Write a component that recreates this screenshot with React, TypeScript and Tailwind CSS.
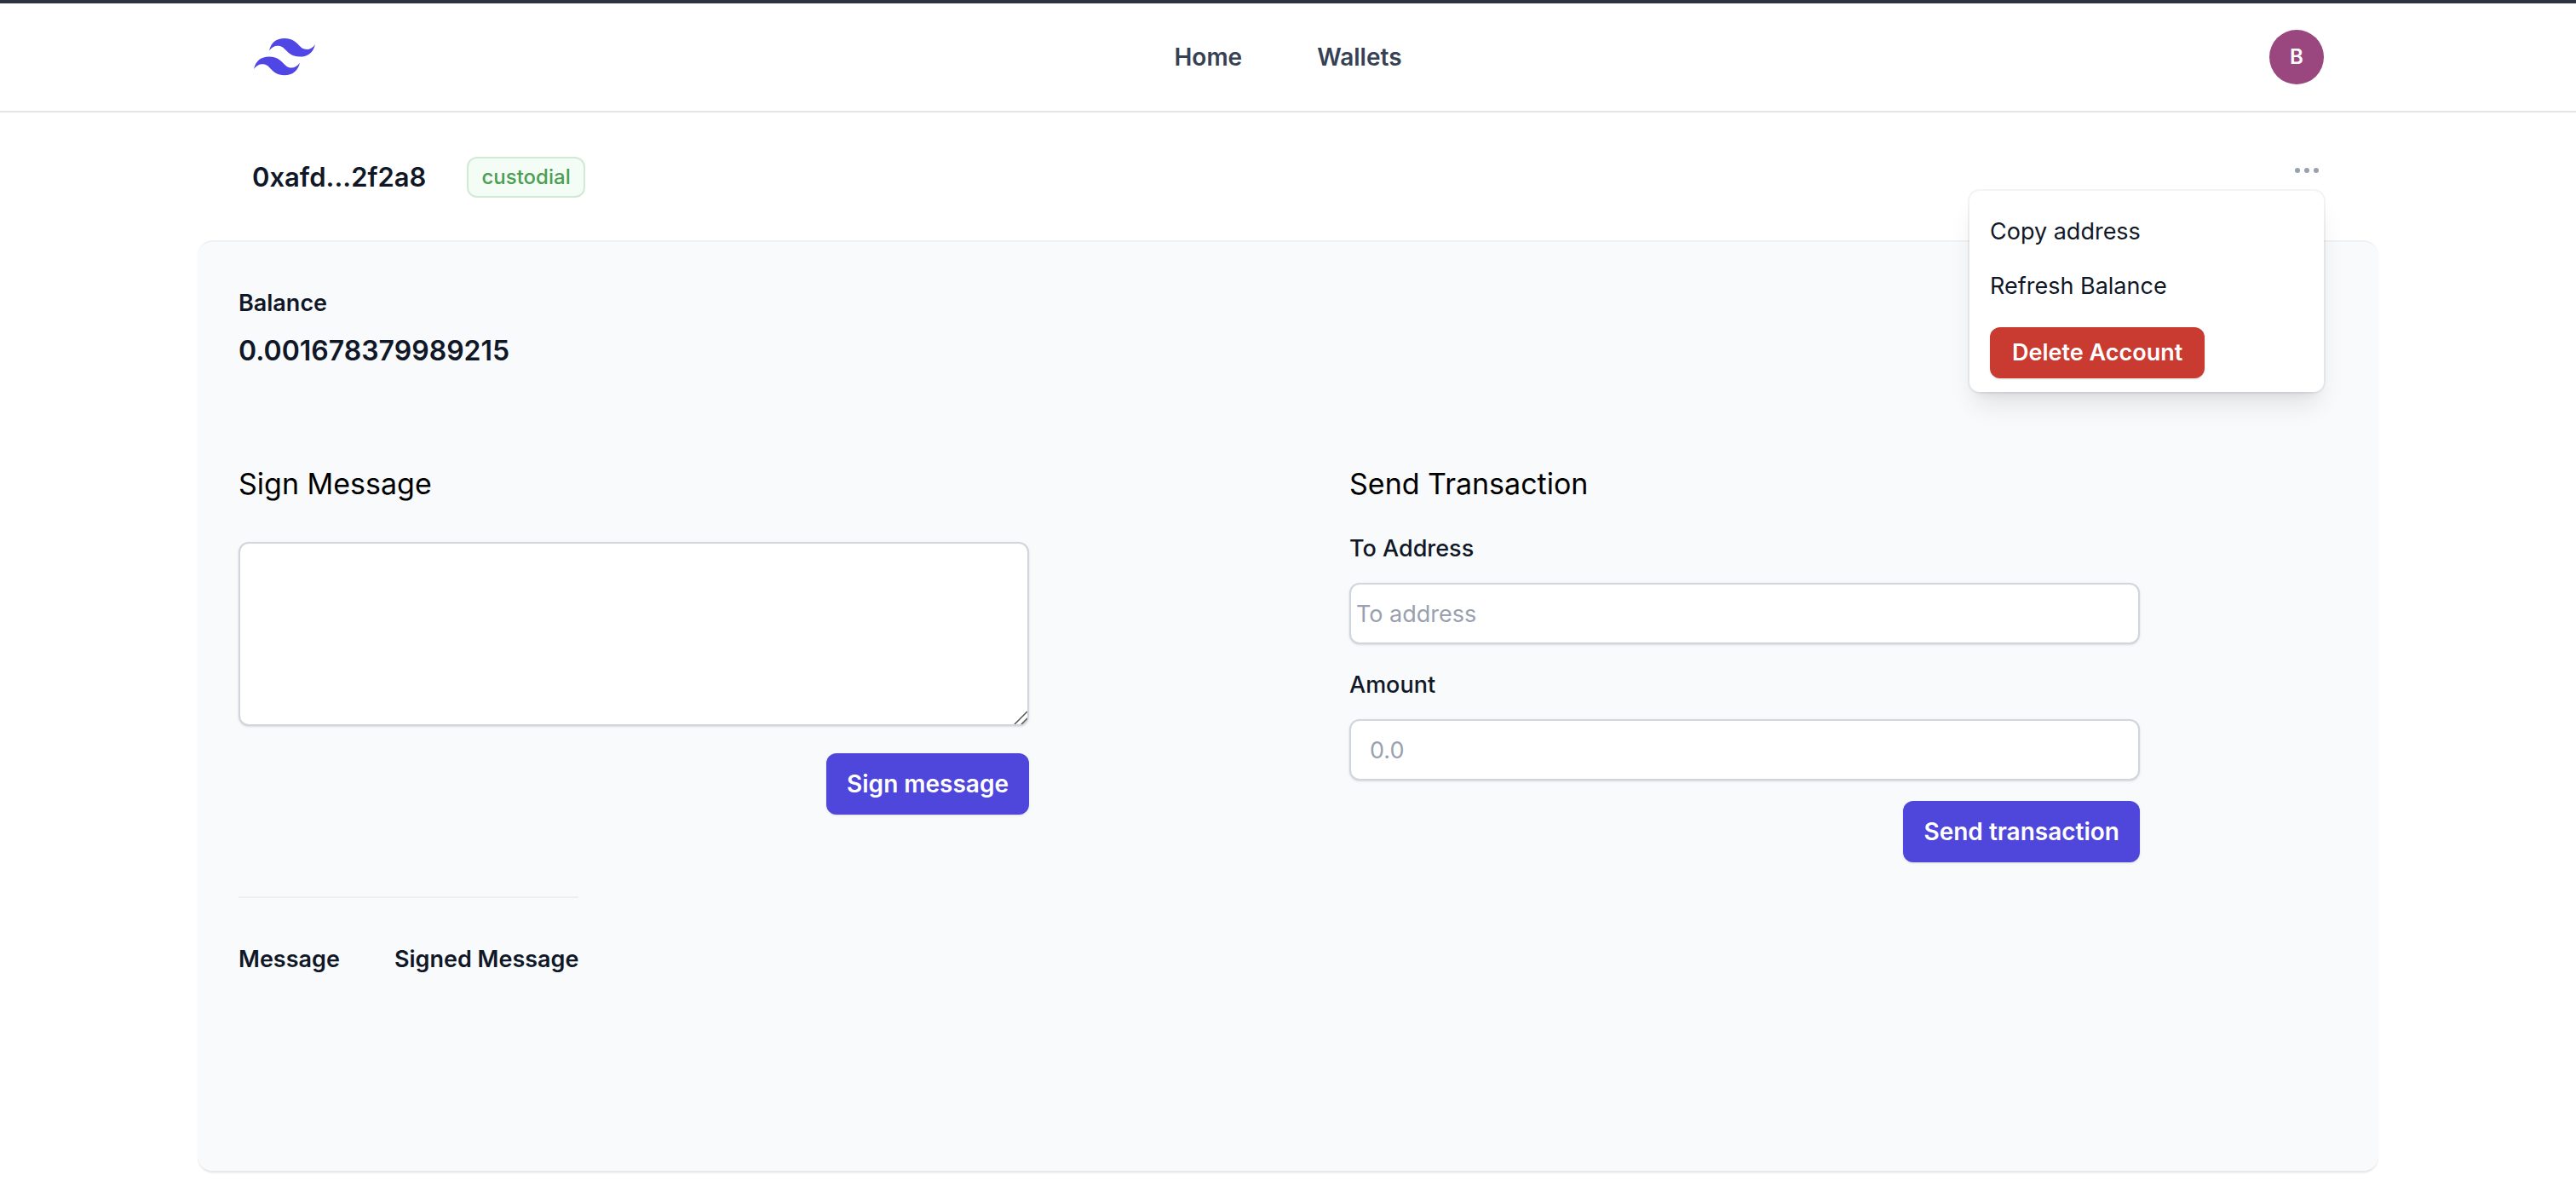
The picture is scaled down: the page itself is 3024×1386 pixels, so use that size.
import React from "react";

function Logo() {
  return (
    <svg viewBox="0 0 54 33" className="h-11 w-[72px] fill-[#4f46e5]" aria-hidden="true">
      <path d="M27 0c-7.2 0-11.7 3.6-13.5 10.8 2.7-3.6 5.85-4.95 9.45-4.05 2.054.513 3.522 2.004 5.147 3.653C30.744 13.09 33.808 16.2 40.5 16.2c7.2 0 11.7-3.6 13.5-10.8-2.7 3.6-5.85 4.95-9.45 4.05-2.054-.513-3.522-2.004-5.147-3.653C36.756 3.11 33.692 0 27 0zM13.5 16.2C6.3 16.2 1.8 19.8 0 27c2.7-3.6 5.85-4.95 9.45-4.05 2.054.514 3.522 2.004 5.147 3.653C17.244 29.29 20.308 32.4 27 32.4c7.2 0 11.7-3.6 13.5-10.8-2.7 3.6-5.85 4.95-9.45 4.05-2.054-.513-3.522-2.004-5.147-3.653C23.256 19.31 20.192 16.2 13.5 16.2z" />
    </svg>
  );
}

function NavBar() {
  return (
    <header className="border-t-4 border-b-2 border-t-[#2e3341] border-b-[#e5e5e5]">
      <nav className="mx-auto grid h-[126px] max-w-[2560px] grid-cols-[1fr_auto_1fr] items-center px-16">
        <a href="#" aria-label="Dashboard" className="justify-self-start pl-0.5">
          <Logo />
        </a>
        <div className="flex gap-[88px] text-[28px] leading-12 font-semibold text-gray-700">
          <a href="#home">Home</a>
          <a href="#wallets">Wallets</a>
        </div>
        <button
          type="button"
          aria-label="Account"
          className="flex size-16 items-center justify-center justify-self-end rounded-full bg-[#9a4780] text-2xl font-semibold text-white"
        >
          B
        </button>
      </nav>
    </header>
  );
}

function AccountMenu() {
  return (
    <div className="relative">
      <button type="button" aria-label="Account options" aria-expanded="true" className="block h-8 w-10">
        <svg viewBox="0 0 40 32" className="h-8 w-10 fill-gray-400" aria-hidden="true">
          <circle cx="9" cy="16" r="3" />
          <circle cx="20" cy="16" r="3" />
          <circle cx="31" cy="16" r="3" />
        </svg>
      </button>
      <div className="absolute top-10 right-0 z-10 flex w-[416px] flex-col items-start rounded-xl bg-white px-6 py-4 text-[27px] leading-12 text-gray-900 shadow-[0_20px_30px_-6px_rgb(0_0_0/0.1),0_8px_12px_-8px_rgb(0_0_0/0.1)] ring-2 ring-gray-900/5">
        <button type="button" className="h-16">
          Copy address
        </button>
        <button type="button" className="h-16">
          Refresh Balance
        </button>
        <button
          type="button"
          className="mt-4 h-[60px] rounded-xl bg-[#c93a31] px-[26px] font-semibold text-white shadow-sm"
        >
          Delete Account
        </button>
      </div>
    </div>
  );
}

function PrimaryButton({ children }: { children: React.ReactNode }) {
  return (
    <button
      type="submit"
      className="h-[72px] self-end rounded-xl bg-[#4f46dc] px-6 text-[28px] leading-12 font-semibold text-white shadow-sm"
    >
      {children}
    </button>
  );
}

function SignMessage() {
  return (
    <form className="flex w-4/5 flex-col" onSubmit={(e) => e.preventDefault()}>
      <label htmlFor="message" className="mb-10 text-[34px] leading-14 text-black">
        Sign Message
      </label>
      <div className="relative mb-8">
        <textarea
          id="message"
          className="block h-[216px] w-full resize-none rounded-xl border-2 border-gray-300 bg-white p-3 text-[27px] text-gray-900 shadow-sm"
        />
        <svg
          viewBox="0 0 16 16"
          className="pointer-events-none absolute right-0.5 bottom-0.5 size-4 stroke-[#555] stroke-[1.5]"
          aria-hidden="true"
        >
          <path d="M1 16L16 1M9 16L16 9" />
        </svg>
      </div>
      <PrimaryButton>Sign message</PrimaryButton>
    </form>
  );
}

function SendTransaction() {
  return (
    <form className="flex w-4/5 flex-col" onSubmit={(e) => e.preventDefault()}>
      <h2 className="mb-6 text-[34px] leading-14 text-black">Send Transaction</h2>
      <label htmlFor="to" className="mb-4 text-[27px] leading-12 font-medium text-gray-900">
        To Address
      </label>
      <input
        id="to"
        type="text"
        placeholder="To address"
        className="mb-6 h-[72px] rounded-xl border-2 border-gray-300 bg-white px-1.5 text-[27px] text-gray-900 shadow-sm placeholder:text-gray-400"
      />
      <label htmlFor="amount" className="mb-4 text-[27px] leading-12 font-medium text-gray-900">
        Amount
      </label>
      <input
        id="amount"
        type="text"
        placeholder="0.0"
        className="mb-6 h-[72px] rounded-xl border-2 border-gray-300 bg-white px-[22px] text-[27px] text-gray-900 shadow-sm placeholder:text-gray-400"
      />
      <PrimaryButton>Send transaction</PrimaryButton>
    </form>
  );
}

export default function App() {
  return (
    <div className="min-h-screen bg-white font-['Inter','Liberation_Sans',sans-serif]">
      <NavBar />
      <main className="mx-auto max-w-[2560px]">
        <div className="flex items-start justify-between px-16 pt-[52px] pb-[50px]">
          <div className="flex items-center gap-12">
            <h1 className="text-[31px] leading-12 font-semibold text-gray-900">0xafd...2f2a8</h1>
            <span className="flex h-12 items-center rounded-xl border-2 border-[#d0ead5] bg-[#f3fcf5] px-[15px] text-2xl font-medium text-[#4a9f52]">
              custodial
            </span>
          </div>
          <AccountMenu />
        </div>
        <section className="rounded-[18px] border-y-2 border-t-[#f0f1f2] border-b-[#e8e9ea] bg-[#f9fafc] px-12 pt-12 pb-56 shadow-xs">
          <h2 className="text-[27px] leading-12 font-semibold text-gray-900">Balance</h2>
          <p className="mt-2 text-[32px] leading-12 font-semibold text-gray-900">0.001678379989215</p>
          <div className="mt-[104px] grid grid-cols-2 gap-36">
            <SignMessage />
            <SendTransaction />
          </div>
          <table className="mt-10 border-t-2 border-[#edeef0] text-left text-[27px] leading-12 text-gray-900">
            <thead>
              <tr>
                <th scope="col" className="pt-12 pr-16 font-semibold">
                  Message
                </th>
                <th scope="col" className="pt-12 font-semibold">
                  Signed Message
                </th>
              </tr>
            </thead>
          </table>
        </section>
      </main>
    </div>
  );
}
